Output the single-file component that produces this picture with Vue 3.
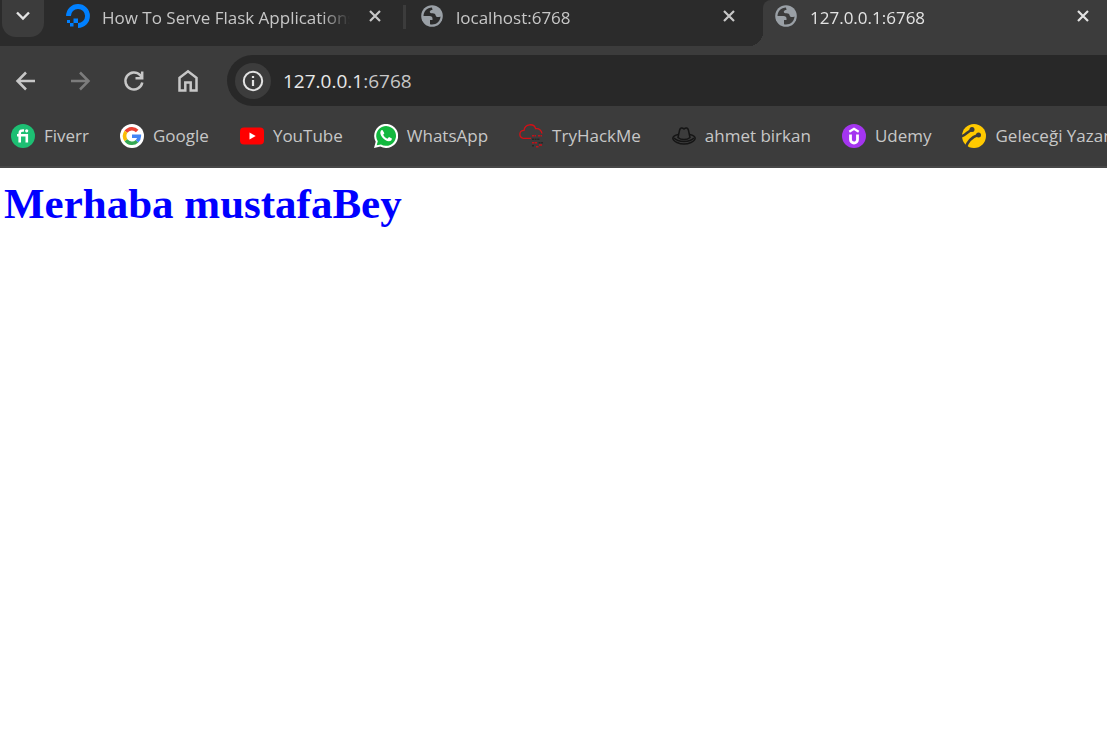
<script setup>
const tabs = [
  { title: 'How To Serve Flask Applications', icon: 'ocean', active: false },
  { title: 'localhost:6768', icon: 'globe', active: false },
  { title: '127.0.0.1:6768', icon: 'globe', active: true },
]
const bookmarks = [
  { name: 'Fiverr', icon: 'fiverr' },
  { name: 'Google', icon: 'google' },
  { name: 'YouTube', icon: 'youtube' },
  { name: 'WhatsApp', icon: 'whatsapp' },
  { name: 'TryHackMe', icon: 'cloud' },
  { name: 'ahmet birkan', icon: 'hat' },
  { name: 'Udemy', icon: 'udemy' },
  { name: 'Geleceği Yazanlar', icon: 'turkcell' },
]
</script>

<template>
  <div class="browser">
    <header>
      <div class="tab-strip">
        <button class="tab-search" aria-label="Search tabs">
          <svg width="16" height="12" viewBox="0 0 16 12"><path d="M2 2.500l6 6 6-6" fill="none" stroke="#e3e3e3" stroke-width="2.4" /></svg>
        </button>
        <div v-for="tab in tabs" :key="tab.title" class="tab" :class="{ active: tab.active }">
          <svg v-if="tab.icon === 'ocean'" class="favicon" viewBox="0 0 24 24">
            <path d="M2.500 12A9.500 9.500 0 1 1 12 21.500" fill="none" stroke="#0080ff" stroke-width="4.800" />
            <path d="M7.500 14.500H12V19H7.500zM4 19h3.500v3.500H4zM1 16h3v3H1z" fill="#0080ff" />
          </svg>
          <svg v-else class="favicon" viewBox="0 0 24 24">
            <circle cx="12" cy="12" r="10.800" fill="#9aa0a6" />
            <path class="land" d="M12 3.500C7 3.500 3.600 7.200 3.500 12H9.500C11.500 12 12.500 13 12.500 14.500V16H10V20.300C15.500 21.500 20.500 17.500 20.500 12.500C18.500 13.500 16 13.500 15.500 11C15 9 12.500 9.500 10.500 9C9 8 10 6 12.500 6z" />
          </svg>
          <span class="tab-title">{{ tab.title }}</span>
          <button class="close" :aria-label="'Close ' + tab.title">
            <svg width="14" height="14" viewBox="0 0 14 14"><path d="M2 2l10 10M12 2L2 12" fill="none" stroke="currentColor" stroke-width="2.2" /></svg>
          </button>
        </div>
      </div>

      <nav class="toolbar">
        <button aria-label="Back">
          <svg class="nav-icon" viewBox="0 0 24 24"><path d="M21 12H4M12 3.500L3.500 12l8.500 8.500" /></svg>
        </button>
        <button class="disabled" aria-label="Forward" disabled>
          <svg class="nav-icon" viewBox="0 0 24 24"><path d="M3 12h17M12 3.500l8.500 8.500-8.500 8.500" /></svg>
        </button>
        <button aria-label="Reload">
          <svg class="nav-icon" viewBox="0 0 24 24"><path d="M20.300 13.500A8.500 8.500 0 1 1 18.200 6.200L20 8.500M20.200 2.500V9.300H13.500" /></svg>
        </button>
        <button aria-label="Home">
          <svg class="nav-icon" viewBox="0 0 24 24"><path d="M3.500 21.500V8.800L12 2.300l8.500 6.500v12.700h-5.800v-8H9.300v8z" /></svg>
        </button>
        <div class="address">
          <button class="site-info" aria-label="View site information">
            <svg width="22" height="22" viewBox="0 0 22 22">
              <circle cx="11" cy="11" r="9.200" fill="none" stroke="#e3e3e3" stroke-width="2" />
              <path d="M11 10v6M11 6v2" stroke="#e3e3e3" stroke-width="2.200" />
            </svg>
          </button>
          <a class="url" href="#">127.0.0.1<span>:6768</span></a>
        </div>
      </nav>

      <nav class="bookmarks">
        <a v-for="b in bookmarks" :key="b.name" href="#" class="bookmark">
          <svg class="favicon" viewBox="0 0 24 24">
            <g v-if="b.icon === 'fiverr'">
              <circle cx="12" cy="12" r="12" fill="#1dbf73" />
              <path d="M8.700 18.500V9.500C8.700 7 10 6.200 13 6.500M6 11.200h9.800v7.300" fill="none" stroke="#fff" stroke-width="2.600" />
              <circle cx="15.700" cy="6.800" r="1.600" fill="#fff" />
            </g>
            <g v-else-if="b.icon === 'google'">
              <circle cx="12" cy="12" r="12" fill="#fff" />
              <g fill="none" stroke-width="3.600">
                <path d="M6 7.800A7.300 7.300 0 0 1 17.200 6.900" stroke="#ea4335" />
                <path d="M6 16.200A7.300 7.300 0 0 1 6 7.800" stroke="#fbbc05" />
                <path d="M17 17.300A7.300 7.300 0 0 1 6 16.200" stroke="#34a853" />
                <path d="M12 12.200h7.300A7.300 7.300 0 0 1 17 17.300" stroke="#4285f4" />
              </g>
            </g>
            <g v-else-if="b.icon === 'youtube'">
              <rect y="3.500" width="24" height="17" rx="4" fill="#f00" />
              <path d="M9.500 8.500v7l6.200-3.500z" fill="#fff" />
            </g>
            <g v-else-if="b.icon === 'whatsapp'">
              <path d="M0 24l1.700-6.200A12 12 0 1 1 6.300 22.400z" fill="#fff" />
              <path d="M2.700 21.300l1.100-4A9.900 9.900 0 1 1 7 20.400z" fill="#12b83e" />
              <path d="M8.600 6.300c-.5-.4-1.300-.2-1.700.4-2.500 3.300 3.300 10.400 8 10.500 1.900 0 3.100-1.200 3-2.700l-2.900-1.500-1.600 1.700c-1.800-.6-3.400-2.100-4.200-3.900l1.200-1.500z" fill="#fff" />
            </g>
            <g v-else-if="b.icon === 'cloud'">
              <path d="M12 14.300H4.500C-.5 13.500-.3 6.500 5 6.300C6-.5 15-1 16.700 4.700C20 4 22.500 6.500 23 9.500" fill="none" stroke="#d41016" stroke-width="1.300" />
              <g fill="none" stroke-width="1.600">
                <path d="M13 11.800h4M19 11.800h4M13 18.800h5M17 22.800h3" stroke="#c11119" stroke-dasharray="2.500 .5" />
                <path d="M13 15.300h8M19.500 18.800H24M13 21.800h2" stroke="#262626" stroke-dasharray="2 .6" />
                <path d="M20 21h3" stroke="#c11119" />
              </g>
            </g>
            <g v-else-if="b.icon === 'hat'" fill="none" stroke="#151515" stroke-width="1.500">
              <path d="M6 13.500L7.500 6.500C8 4 10 3 12 5C14 3 16 4 16.500 6.500L18 13.500C15 16.300 9 16.300 6 13.500z" />
              <path d="M6.300 10.500C-1 12-.5 16 5 18.500C9 20.300 15 20.300 19 18.500C24.500 16 25 12 17.700 10.500" />
              <path d="M2 14c4 4.500 16 4.500 20 0" />
            </g>
            <g v-else-if="b.icon === 'udemy'">
              <circle cx="12" cy="12" r="12" fill="#a435f0" />
              <path d="M8.500 10.500v5a3.500 3.500 0 0 0 7 0v-5" fill="none" stroke="#fff" stroke-width="2.800" />
              <path d="M7.300 7.700L12 4.800l4.700 2.900" fill="none" stroke="#fff" stroke-width="2.200" />
            </g>
            <g v-else>
              <circle cx="12" cy="12" r="12" fill="#ffc900" />
              <path d="M-1 12.500C3.500 11.500 5 8 9.500 5.800M3.500 24C6 16.500 10 13 16 11" fill="none" stroke="#3c3c3c" stroke-width="2.600" />
              <circle cx="10" cy="5.500" r="2.500" fill="#3c3c3c" /><circle cx="16.500" cy="11" r="2.500" fill="#3c3c3c" />
            </g>
          </svg>
          <span>{{ b.name }}</span>
        </a>
      </nav>
    </header>
    <main><h1>Merhaba mustafaBey</h1></main>
  </div>
</template>

<style>
body { margin: 0; background: #fff; }
</style>

<style scoped>
.browser { overflow: hidden; font-family: "Open Sans", "Noto Sans", sans-serif; }
header { background: #3c3c3c; border-bottom: 2px solid #474747; }
button { border: 0; padding: 0; background: none; color: #c7c7c7; display: flex; align-items: center; justify-content: center; flex: none; }
svg { display: block; flex: none; }
a { text-decoration: none; }
.favicon { width: 24px; height: 24px; }
.tab-strip { display: flex; height: 46px; background: #2b2b2b; overflow: hidden; }
.tab-search { width: 42px; height: 37px; margin: 0 11px 0 2px; padding-bottom: 5px; background: #3c3c3c; border-radius: 0 0 14px 14px; }
.tab { position: relative; box-sizing: border-box; flex: none; width: 354px; height: 46px; padding: 0 27px 14px 11px; display: flex; align-items: center; color: #c7c7c7; font-size: 17px; }
.tab .land { fill: #2b2b2b; }
.tab-title { flex: 1; min-width: 0; margin: 3px 18px 0 12px; white-space: nowrap; overflow: hidden; line-height: 26px; mask-image: linear-gradient(to right, #000 calc(100% - 28px), transparent); }
.tab + .tab:not(.active)::before { content: ""; position: absolute; left: -6px; top: 5px; width: 3px; height: 24px; background: #3c3c3c; }
.tab.active { background: #3c3c3c; border-radius: 8px 8px 0 0; color: #e3e3e3; }
.tab.active .close { color: #e3e3e3; }
.tab.active .land { fill: #3c3c3c; }
.tab.active::before { content: ""; position: absolute; left: -14px; bottom: 0; width: 14px; height: 14px; background: radial-gradient(circle at 0 0, #2b2b2b 14px, #3c3c3c 14px); }
.toolbar { display: flex; align-items: center; height: 60px; padding: 9px 0 0 14px; box-sizing: border-box; }
.toolbar > button { width: 24px; height: 24px; margin-right: 30px; }
.nav-icon { width: 24px; height: 24px; fill: none; stroke: #c7c7c7; stroke-width: 2.5; }
.disabled .nav-icon { stroke: #7c7c7c; }
.address { flex: 1; display: flex; align-items: center; height: 51px; padding-left: 8px; gap: 12px; background: #282828; border-radius: 26px 0 0 26px; margin-left: -3px; }
.site-info { width: 36px; height: 36px; border-radius: 50%; background: #3c3c3c; }
.url { color: #e8e8e8; font-size: 19px; }
.url span { color: #c7c7c7; }
.bookmarks { display: flex; align-items: center; gap: 31px; height: 60px; padding-left: 11px; overflow: hidden; }
.bookmark { flex: none; display: flex; align-items: center; gap: 9px; color: #c7c7c7; font-size: 17px; line-height: 26px; white-space: nowrap; }
main { padding: 8px 4px; }
h1 { margin: 0; font: bold 43px/56px "Liberation Serif", serif; color: #00f; }
</style>
